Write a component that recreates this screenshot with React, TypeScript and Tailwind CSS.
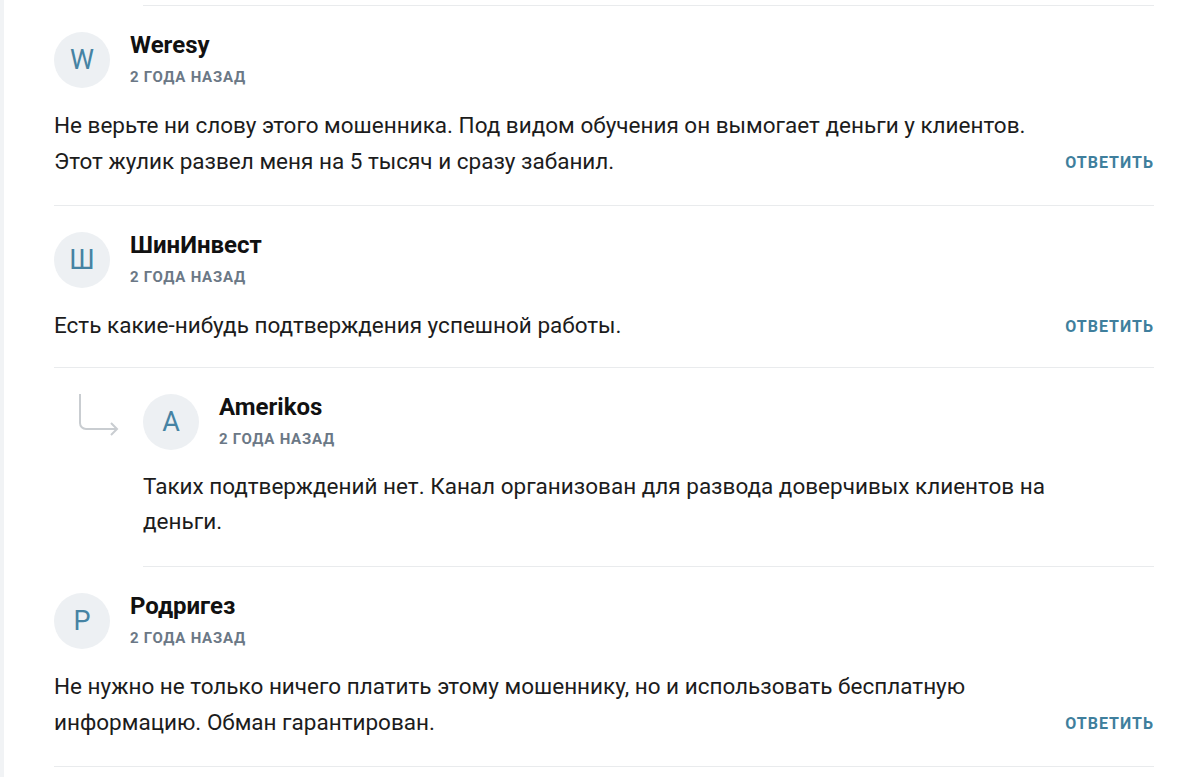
type Comment = {
  letter: string;
  name: string;
  date: string;
  text: string;
  reply?: boolean;
};

function Avatar({ letter }: { letter: string }) {
  return (
    <div className="w-[56px] h-[56px] rounded-full bg-[#edf0f3] flex items-center justify-center shrink-0 text-[27px] text-[#4683a3] leading-none">
      {letter}
    </div>
  );
}

function Header({ c }: { c: Comment }) {
  return (
    <div className="flex gap-[20px]">
      <Avatar letter={c.letter} />
      <div className="flex flex-col">
        <div className="text-[24px] leading-[27px] font-bold text-[#111111]">{c.name}</div>
        <div className="mt-[8px] text-[15px] leading-[20px] font-bold uppercase tracking-[0.75px] text-[#6b7886]">
          {c.date}
        </div>
      </div>
    </div>
  );
}

function TopComment({ c, pb }: { c: Comment; pb: string }) {
  return (
    <div className={`pt-[26px] border-b border-[#e9ebed] ${pb}`}>
      <Header c={c} />
      <div className="mt-[19px] flex items-end gap-[20px]">
        <p className="flex-1 text-[22.5px] leading-[36px] text-[#1c1c1c]">{c.text}</p>
        <button className="text-[16px] leading-[36px] font-bold uppercase tracking-[1px] text-[#3f7f9d] shrink-0 translate-y-[2px]">
          Ответить
        </button>
      </div>
    </div>
  );
}

function ReplyArrow() {
  return (
    <svg className="absolute left-[-67px] top-[24px]" width="44" height="46" viewBox="0 0 44 46" fill="none">
      <path d="M4 2 V31 a6 6 0 0 0 6 6 H41" stroke="#c9cdd1" strokeWidth="2" />
      <path d="M35 31 L41 37 L35 43" stroke="#c9cdd1" strokeWidth="2" />
    </svg>
  );
}

export default function App() {
  const first: Comment = {
    letter: 'W',
    name: 'Weresy',
    date: '2 года назад',
    text: 'Не верьте ни слову этого мошенника. Под видом обучения он вымогает деньги у клиентов. Этот жулик развел меня на 5 тысяч и сразу забанил.',
  };
  const second: Comment = {
    letter: 'Ш',
    name: 'ШинИнвест',
    date: '2 года назад',
    text: 'Есть какие-нибудь подтверждения успешной работы.',
  };
  const nested: Comment = {
    letter: 'A',
    name: 'Amerikos',
    date: '2 года назад',
    text: 'Таких подтверждений нет. Канал организован для развода доверчивых клиентов на деньги.',
  };
  const fourth: Comment = {
    letter: 'Р',
    name: 'Родригез',
    date: '2 года назад',
    text: 'Не нужно не только ничего платить этому мошеннику, но и использовать бесплатную информацию. Обман гарантирован.',
  };

  return (
    <div className="min-h-screen flex bg-white font-['Roboto','Liberation_Sans',sans-serif]">
      <div className="w-[4px] bg-[#f1f3f5] shrink-0" />
      <div className="w-[1100px] ml-[50px]">
        <div className="mt-[5px] ml-[89px] border-t border-[#e9ebed]" />
        <TopComment c={first} pb="pb-[26px]" />
        <TopComment c={second} pb="pb-[24px]" />
        <div className="relative ml-[89px] pt-[26px] pb-[27px] border-b border-[#e9ebed]">
          <ReplyArrow />
          <Header c={nested} />
          <p className="mt-[19px] pr-[100px] text-[22.5px] leading-[35px] text-[#1c1c1c]">{nested.text}</p>
        </div>
        <TopComment c={fourth} pb="pb-[26px]" />
      </div>
    </div>
  );
}
